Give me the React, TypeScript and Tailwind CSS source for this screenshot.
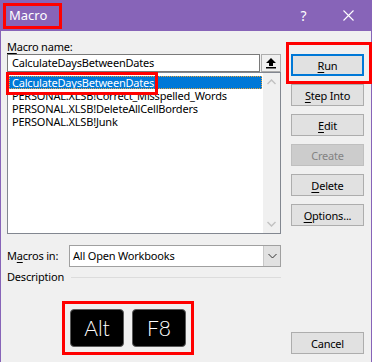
import React from "react";

const rows = [
  "CalculateDaysBetweenDates",
  "PERSONAL.XLSB!Correct_Misspelled_Words",
  "PERSONAL.XLSB!DeleteAllCellBorders",
  "PERSONAL.XLSB!Junk",
];

const U = ({ children }: { children: React.ReactNode }) => (
  <span className="underline underline-offset-[2px]">{children}</span>
);

const Button = ({
  children,
  variant = "normal",
}: {
  children: React.ReactNode;
  variant?: "normal" | "default" | "disabled";
}) => {
  const styles = {
    normal: "border border-[#adadad] bg-[#e1e1e1] text-black",
    default: "border-2 border-[#0078d7] bg-[#e1e1e1] text-black",
    disabled: "border border-[#bfbfbf] bg-[#cccccc] text-[#838383]",
  }[variant];
  return (
    <div className={`h-[22px] w-full flex items-center justify-center ${styles}`}>
      <span className="leading-none">{children}</span>
    </div>
  );
};

export default function App() {
  return (
    <div className="w-[372px] h-[362px] flex flex-col bg-[#f0f0f0] border-x border-[#8764b8] font-['Noto_Sans',sans-serif] text-[11px] tracking-[-0.2px] text-black">
      {/* Title bar */}
      <div className="relative h-[31px] shrink-0 bg-[#8764b8] flex items-center text-white">
        <span className="ml-[8px] text-[13px] tracking-normal">Macro</span>
        <div className="ml-auto flex h-full">
          <div className="w-[45px] h-full flex items-center justify-center text-[14px]">?</div>
          <div className="w-[45px] h-full flex items-center justify-center">
            <svg width="11" height="11" viewBox="0 0 11 11">
              <path d="M0.5 0.5 L10.5 10.5 M10.5 0.5 L0.5 10.5" stroke="white" strokeWidth="1.1" />
            </svg>
          </div>
        </div>
        <div className="absolute left-[2px] top-[3px] w-[59px] h-[26px] border-[3px] border-[#ff0000]" />
      </div>

      <div className="flex flex-1 pl-[6px] pr-[7px]">
        {/* Left column */}
        <div className="w-[274px] flex flex-col pt-[8px]">
          <div className="h-[15px] leading-[15px]">
            <U>M</U>acro name:
          </div>

          <div className="flex h-[18px]">
            <div className="w-[253px] border border-[#7a7a7a] bg-white pl-[4px] flex items-center">
              CalculateDaysBetweenDates
            </div>
            <div className="ml-[1px] w-[20px] border border-[#adadad] bg-[#f0f0f0] flex items-center justify-center">
              <svg width="10" height="11" viewBox="0 0 10 11">
                <path d="M5 0 L10 5 H7 V8 H3 V5 H0 Z" fill="black" />
                <rect x="0" y="9" width="10" height="1.5" fill="black" />
              </svg>
            </div>
          </div>

          {/* Macro list */}
          <div className="relative h-[162px] border border-[#828790] bg-white flex">
            <div className="flex-1 pt-[3px] px-[1px]">
              {rows.map((r, i) => (
                <div
                  key={r}
                  className={`h-[13px] leading-[13px] pl-[3px] whitespace-nowrap ${
                    i === 0 ? "bg-[#0078d7] text-white outline-1 outline-dotted outline-[#e8a33d] -outline-offset-1" : ""
                  }`}
                >
                  {r}
                </div>
              ))}
            </div>
            <div className="w-[17px] bg-[#f0f0f0] flex flex-col items-center justify-between py-[6px]">
              <svg width="9" height="6" viewBox="0 0 9 6">
                <path d="M0.5 5 L4.5 1 L8.5 5" stroke="#c2c2c2" strokeWidth="1.5" fill="none" />
              </svg>
              <svg width="9" height="6" viewBox="0 0 9 6">
                <path d="M0.5 1 L4.5 5 L8.5 1" stroke="#c2c2c2" strokeWidth="1.5" fill="none" />
              </svg>
            </div>
            <div className="absolute -left-[2px] -top-[1px] w-[152px] h-[23px] border-[3px] border-[#ff0000]" />
          </div>

          {/* Macros in */}
          <div className="mt-[11px] h-[22px] flex items-center">
            <span>
              M<U>a</U>cros in:
            </span>
            <div className="ml-auto w-[212px] h-full border border-[#a0a0a0] bg-white flex">
              <div className="flex-1 flex items-center pl-[3px]">All Open Workbooks</div>
              <div className="w-[17px] bg-[#e1e1e1] border-l border-[#c8c8c8] flex items-center justify-center">
                <svg width="9" height="6" viewBox="0 0 9 6">
                  <path d="M0.5 1 L4.5 5 L8.5 1" stroke="#333" strokeWidth="1" fill="none" />
                </svg>
              </div>
            </div>
          </div>

          {/* Description */}
          <div className="mt-[3px] h-[14px] flex items-center">
            <span>Description</span>
            <div className="ml-[7px] flex-1 h-px bg-[#dcdcdc]" />
          </div>

          {/* Shortcut keys */}
          <div className="mt-[17px] ml-[55px] w-fit flex gap-[8px] p-[5px] border-[3px] border-[#ff0000]">
            {["Alt", "F8"].map((k) => (
              <div
                key={k}
                className="w-[54px] h-[38px] rounded-[4px] bg-black border border-[#5a5a5a] flex items-center justify-center text-white text-[21px] tracking-normal font-['Lato',sans-serif] font-light"
              >
                {k}
              </div>
            ))}
          </div>
        </div>

        {/* Right column */}
        <div className="relative ml-[10px] w-[73px] flex flex-col gap-[8px] pt-[23px] pb-[8px]">
          <Button variant="default">
            <U>R</U>un
          </Button>
          <Button>
            <U>S</U>tep Into
          </Button>
          <Button>
            <U>E</U>dit
          </Button>
          <Button variant="disabled">Create</Button>
          <Button>
            <U>D</U>elete
          </Button>
          <Button>
            <U>O</U>ptions...
          </Button>
          <div className="mt-auto">
            <Button>Cancel</Button>
          </div>
          <div className="absolute -left-[5px] top-[11px] w-[86px] h-[42px] border-[3px] border-[#ff0000]" />
        </div>
      </div>
    </div>
  );
}
